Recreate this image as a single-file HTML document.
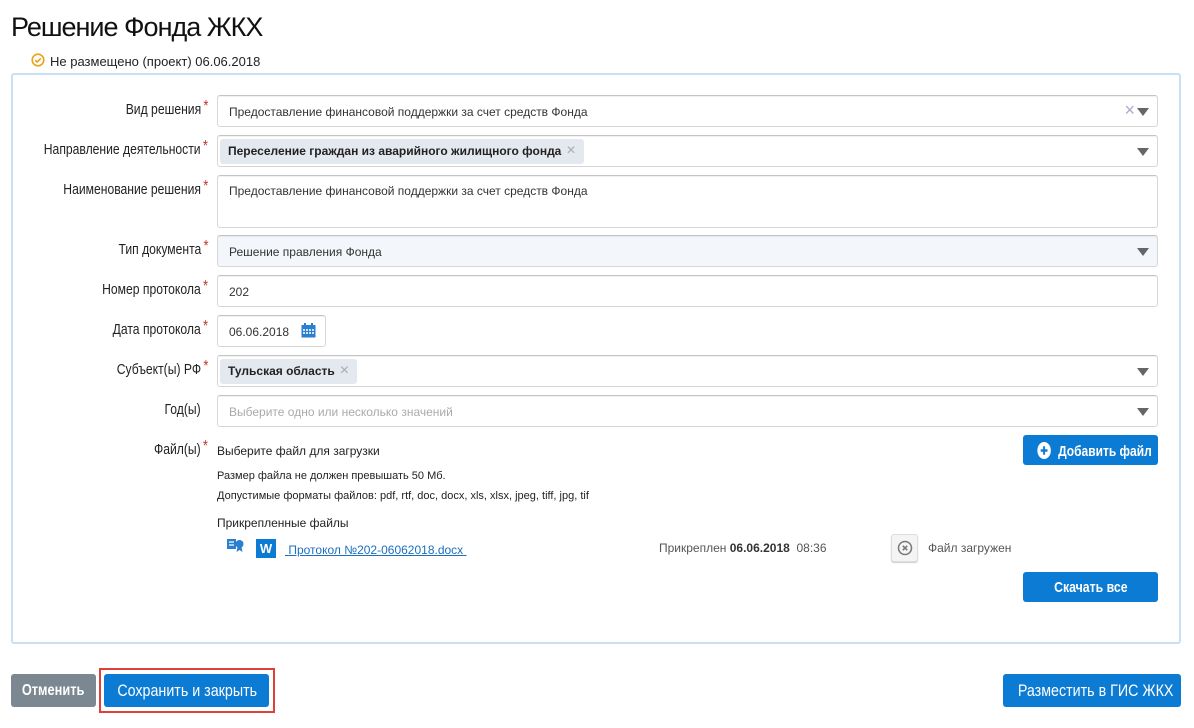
<!DOCTYPE html>
<html><head><meta charset="utf-8"><style>
*{box-sizing:border-box;margin:0;padding:0}
body{width:1194px;height:728px;background:#fff;font-family:"Liberation Sans",sans-serif;position:relative;overflow:hidden;color:#222}
.a{position:absolute}
.c{display:inline-block;transform-origin:center;white-space:nowrap}
h1{position:absolute;left:11px;top:12px;font-size:27px;font-weight:normal;letter-spacing:-1px;color:#111}
.panel{left:11px;top:73px;width:1170px;height:571px;border:2px solid #c8e0f4;border-radius:3px}
.lbl{position:absolute;right:993px;font-size:15px;color:#222;white-space:nowrap;transform:scaleX(.81);transform-origin:right center}
.lbl sup{color:#c0392b;font-size:16px;position:absolute;right:-9px;top:-3px}
.f{position:absolute;left:217px;width:941px;height:32px;border:1px solid #d7d7d7;border-top-color:#c4c4c4;border-radius:3px;font-size:12px;color:#333;padding:9px 11px;box-shadow:inset 0 1px 1px rgba(0,0,0,.06)}
.tri{position:absolute;right:8px;top:12px;width:0;height:0;border-left:6px solid transparent;border-right:6px solid transparent;border-top:8px solid #666}
.tag{position:absolute;left:2px;top:3px;height:25px;background:#e4e8ef;border-radius:3px;font-weight:bold;font-size:12px;padding:5px 8px;color:#222;white-space:nowrap}
.tag span{color:#aaa;font-weight:normal;font-size:16px;margin-left:5px;line-height:12px}
.btn{position:absolute;background:#0c7bd3;color:#fff;border-radius:3px;font-weight:bold;text-align:center;font-size:15px;white-space:nowrap}
.s{font-size:11px;color:#222;position:absolute;left:217px}
</style></head><body>
<h1>Решение Фонда ЖКХ</h1>
<svg class="a" style="left:31px;top:53px" width="14" height="14" viewBox="0 0 14 14"><circle cx="7" cy="7" r="5.8" fill="none" stroke="#e9a317" stroke-width="1.6"/><path d="M4.2 7.1l2 2 3.6-3.8" fill="none" stroke="#e9a317" stroke-width="1.6"/></svg>
<div class="a" style="left:50px;top:54px;font-size:13px;color:#222">Не размещено (проект) 06.06.2018</div>
<div class="a panel"></div>

<div class="lbl" style="top:101px">Вид решения<sup>*</sup></div>
<div class="f" style="top:95px">Предоставление финансовой поддержки за счет средств Фонда<span class="a" style="right:22px;top:5px;color:#aac;font-size:18px;line-height:18px">×</span><div class="tri"></div></div>

<div class="lbl" style="top:141px">Направление деятельности<sup>*</sup></div>
<div class="f" style="top:135px"><div class="tag">Переселение граждан из аварийного жилищного фонда<span>×</span></div><div class="tri"></div></div>

<div class="lbl" style="top:181px">Наименование решения<sup>*</sup></div>
<div class="f" style="top:175px;height:53px;padding-top:8px">Предоставление финансовой поддержки за счет средств Фонда</div>

<div class="lbl" style="top:241px">Тип документа<sup>*</sup></div>
<div class="f" style="top:235px;background:#f3f6fa">Решение правления Фонда<div class="tri"></div></div>

<div class="lbl" style="top:281px">Номер протокола<sup>*</sup></div>
<div class="f" style="top:275px">202</div>

<div class="lbl" style="top:321px">Дата протокола<sup>*</sup></div>
<div class="f" style="top:315px;width:109px">06.06.2018</div>
<svg class="a" style="left:301px;top:323px" width="15" height="15" viewBox="0 0 15 15"><rect x="0.5" y="2" width="14" height="12.5" fill="#2a7fd0"/><rect x="3" y="0" width="2" height="4" fill="#2a7fd0"/><rect x="10" y="0" width="2" height="4" fill="#2a7fd0"/><g fill="#cfe3f7"><rect x="2" y="6" width="2" height="2"/><rect x="5" y="6" width="2" height="2"/><rect x="8" y="6" width="2" height="2"/><rect x="11" y="6" width="2" height="2"/><rect x="2" y="9" width="2" height="2"/><rect x="5" y="9" width="2" height="2"/><rect x="8" y="9" width="2" height="2"/><rect x="11" y="9" width="2" height="2"/></g></svg>

<div class="lbl" style="top:361px">Субъект(ы) РФ<sup>*</sup></div>
<div class="f" style="top:355px"><div class="tag">Тульская область<span>×</span></div><div class="tri"></div></div>

<div class="lbl" style="top:401px">Год(ы)</div>
<div class="f" style="top:395px;color:#aaa">Выберите одно или несколько значений<div class="tri"></div></div>

<div class="lbl" style="top:441px">Файл(ы)<sup>*</sup></div>
<div class="a" style="left:217px;top:444px;font-size:12px">Выберите файл для загрузки</div>
<div class="btn" style="left:1023px;top:435px;width:135px;height:30px;padding-top:7px"><span class="c" style="transform:scaleX(.8)"><svg style="vertical-align:-3px;margin-right:9px" width="17" height="17" viewBox="0 0 14 14"><circle cx="7" cy="7" r="7" fill="#fff"/><path d="M7 3.5v7M3.5 7h7" stroke="#0c7bd3" stroke-width="2"/></svg>Добавить файл</span></div>
<div class="s" style="top:470px">Размер файла не должен превышать 50 Мб.</div>
<div class="s" style="top:490px">Допустимые форматы файлов: pdf, rtf, doc, docx, xls, xlsx, jpeg, tiff, jpg, tif</div>
<div class="a" style="left:217px;top:516px;font-size:12px">Прикрепленные файлы</div>
<svg class="a" style="left:227px;top:538px" width="17" height="15" viewBox="0 0 17 15"><rect x="0" y="1" width="9" height="10" fill="#2a7fd0"/><path d="M2 4h5M2 7h5" stroke="#fff" stroke-width="1.3"/><circle cx="12.5" cy="6" r="4" fill="#2a7fd0"/><path d="M10.5 9l-1 5 3-2 3 2-1-5z" fill="#2a7fd0"/></svg>
<div class="a" style="left:256px;top:539px;width:20px;height:19px;background:#0c7bd3;color:#fff;font-weight:bold;font-size:13px;text-align:center;line-height:19px">W</div>
<div class="a" style="left:285px;top:543px;font-size:12px;color:#1a6fc0;text-decoration:underline">&nbsp;Протокол №202-06062018.docx&nbsp;</div>
<div class="a" style="left:659px;top:541px;font-size:12px;color:#555">Прикреплен <b style="color:#333">06.06.2018</b>&nbsp; 08:36</div>
<div class="a" style="left:891px;top:534px;width:27px;height:28px;border:1px solid #ddd;border-radius:3px;background:#f4f4f4;box-shadow:0 1px 1px rgba(0,0,0,.2)"><svg style="position:absolute;left:5px;top:5px" width="16" height="16" viewBox="0 0 16 16"><circle cx="8" cy="8" r="6.5" fill="none" stroke="#777" stroke-width="1.5"/><path d="M5.8 5.8l4.4 4.4M10.2 5.8l-4.4 4.4" stroke="#777" stroke-width="1.6"/></svg></div>
<div class="a" style="left:928px;top:541px;font-size:12px;color:#555">Файл загружен</div>
<div class="btn" style="left:1023px;top:572px;width:135px;height:30px;padding-top:7px"><span class="c" style="transform:scaleX(.82)">Скачать все</span></div>

<div class="btn" style="left:11px;top:674px;width:85px;height:33px;padding-top:8px;background:#7b8891;font-size:16px"><span class="c" style="transform:scaleX(.8)">Отменить</span></div>
<div class="a" style="left:99px;top:668px;width:176px;height:45px;border:2px solid #e0403a"></div>
<div class="btn" style="left:104px;top:674px;width:165px;height:33px;padding-top:7px;font-weight:normal;font-size:17px"><span class="c" style="transform:scaleX(.84)">Сохранить и закрыть</span></div>
<div class="btn" style="left:1003px;top:674px;width:178px;height:33px;padding-top:7px;font-weight:normal;font-size:17px"><span class="c" style="transform:scaleX(.84)">Разместить в ГИС ЖКХ</span></div>
</body></html>
